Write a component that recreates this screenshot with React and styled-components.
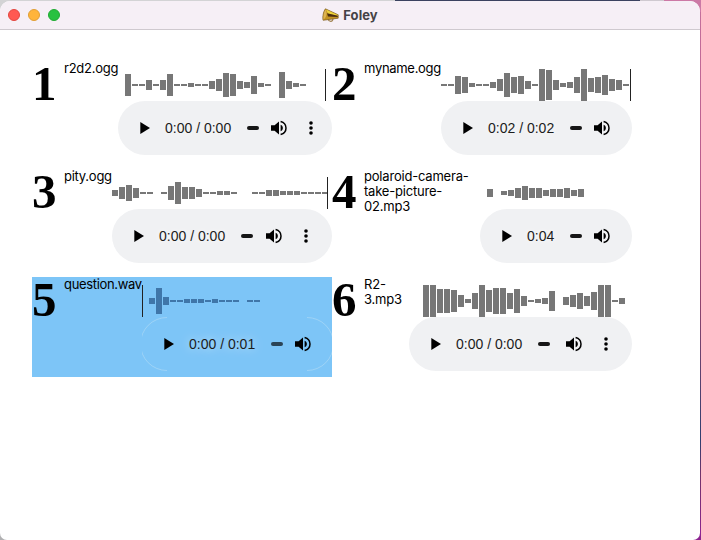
import React from 'react';
import styled, { createGlobalStyle } from 'styled-components';

const GlobalStyle = createGlobalStyle`
  * { box-sizing: border-box; }
  body { margin: 0; overflow: hidden; font-family: Inter, "Liberation Sans", sans-serif; }
`;

const Desktop = styled.div`
  width: 701px;
  height: 540px;
  padding: 1px 1px 0 0;
  background:
    linear-gradient(90deg, #d3d3d5 0 395px, #3b4260 395px 640px, #cfc9d0 640px 664px, #cc79a6 664px) top / 100% 12px no-repeat,
    linear-gradient(90deg, #b0b0b2 0 350px, #8c2391 350px) bottom / 100% 12px no-repeat,
    linear-gradient(180deg, #c5719d 0, #b9598c 180px, #91436f 300px, #2e3f70 440px, #73326b 475px, #8c2391 540px);
`;

const Window = styled.div`
  width: 700px;
  height: 539px;
  overflow: hidden;
  border-radius: 10px 10px 7px 7px;
  background: #fff;
`;

const TitleBar = styled.header`
  display: grid;
  grid-template-columns: 100px 1fr 100px;
  align-items: center;
  height: 29px;
  background: #f6eff6;
  border-bottom: 1px solid #cfc9cf;
`;

const Lights = styled.div`
  display: flex;
  gap: 8px;
  padding-left: 8px;
`;

const Light = styled.span`
  width: 12px;
  height: 12px;
  border-radius: 50%;
  background: ${(p) => p.$fill};
  border: 1px solid ${(p) => p.$edge};
`;

const Title = styled.h1`
  display: flex;
  align-items: center;
  justify-content: center;
  gap: 4px;
  margin: 0;
  font-size: 13px;
  line-height: 16px;
  font-weight: 700;
  letter-spacing: 0.1px;
  color: #454246;
`;

const Board = styled.main`
  display: grid;
  grid-template-columns: 300px 300px;
  grid-auto-rows: 100px;
  row-gap: 8px;
  padding: 31px 32px;
`;

const Card = styled.section`
  display: flex;
  background: ${(p) => (p.$selected ? '#7dc5f7' : 'transparent')};
`;

const Digit = styled.div`
  flex: 0 0 32px;
  height: 48px;
  font: 700 49px/45px "Liberation Serif", serif;
  color: #000;
`;

const FileName = styled.div`
  flex: 1 1 0;
  min-width: 0;
  white-space: pre;
  font-size: 13px;
  line-height: 15px;
  letter-spacing: ${(p) => p.$tracking}px;
  color: #000;
`;

const Sound = styled.div`
  flex: 0 0 ${(p) => p.$width}px;
  padding-top: 8px;
`;

const Wave = styled.svg`
  display: block;
  width: 100%;
  height: 32px;
  color: ${(p) => (p.$selected ? '#3f76a9' : '#777')};
`;

const Player = styled.div`
  display: flex;
  align-items: center;
  height: 54px;
  padding-left: 22px;
  border-radius: 27px;
  background: ${(p) => (p.$selected ? 'transparent' : '#f0f1f3')};
  position: relative;
`;

const Outline = styled.svg`
  position: absolute;
  inset: 0;
  width: 100%;
  height: 100%;
`;

const PlayIcon = styled.svg`
  flex: none;
  width: 10px;
  height: 12px;
  margin-right: 15px;
`;

const Time = styled.span`
  flex: 0 0 ${(p) => p.$width}px;
  white-space: nowrap;
  font: 14px/20px "Liberation Sans", sans-serif;
  color: #1c1c1c;
  text-shadow: 0 0 10px ${(p) => (p.$selected ? 'rgba(255,255,255,.7)' : '#fff')};
`;

const Track = styled.span`
  flex: none;
  width: 12px;
  height: 4px;
  margin-left: 15px;
  border-radius: 2px;
  background: ${(p) => (p.$selected ? '#2b4456' : '#161616')};
`;

const SpeakerIcon = styled.svg`
  flex: none;
  width: 18px;
  height: 18px;
  margin-left: ${(p) => p.$gap}px;
`;

const MenuIcon = styled.svg`
  flex: none;
  width: 4px;
  height: 14px;
  margin-left: 21px;
`;

const sounds = [
  { name: 'r2d2.ogg', tracking: -0.25, width: 214, start: 7, cursor: 207, gap: 11, menu: true, time: '0:00 / 0:00',
    bars: [22, 2, 2, 10, 2, 10, 22, 2, 2, 4, 2, 2, 8, 12, 24, 22, 8, 6, 18, 4, 2, 0, 26, 8, 4, 2] },
  { name: 'myname.ogg', tracking: -0.3, width: 191, start: 0, cursor: 189, gap: 11, time: '0:02 / 0:02',
    bars: [2, 2, 18, 16, 4, 2, 2, 6, 12, 24, 16, 18, 8, 2, 32, 30, 10, 4, 6, 16, 32, 14, 16, 20, 12, 10, 2] },
  { name: 'pity.ogg', tracking: -0.25, width: 220, start: 0, cursor: 215, gap: 12, menu: true, time: '0:00 / 0:00',
    bars: [6, 12, 16, 10, 2, 2, 0, 2, 14, 22, 12, 12, 8, 2, 2, 4, 4, 2, 0, 0, 2, 2, 6, 6, 4, 4, 4, 2, 2, 2, 2] },
  { name: 'polaroid-camera-\ntake-picture-\n02.mp3', tracking: -0.2, width: 152, start: 7, gap: 11, time: '0:04',
    bars: [8, 0, 4, 6, 10, 14, 10, 10, 6, 8, 8, 10, 6, 8] },
  { name: 'question.wav', tracking: -0.33, width: 190, start: 7, cursor: 0, gap: 11, time: '0:00 / 0:01', selected: true,
    bars: [6, 26, 8, 2, 2, 4, 4, 4, 2, 4, 2, 2, 2, 0, 2, 2] },
  { name: 'R2-\n3.mp3', tracking: -0.2, width: 223, start: 14, gap: 15, menu: true, time: '0:00 / 0:00',
    bars: [32, 32, 24, 24, 22, 12, 4, 16, 32, 22, 26, 26, 16, 24, 10, 2, 4, 6, 20, 0, 8, 12, 16, 10, 18, 32, 32, 2, 6] },
];

function Horn() {
  return (
    <svg width="17" height="15" viewBox="0 0 17 15">
      <path d="M6 11c1 3.2 4.8 3.2 5-.2" fill="none" stroke="#a08250" strokeWidth="1.2" />
      <path d="M3.4.8C1.6 3 .3 8.500 1 12.200L3.500 12 16.200 10.200V6.800Z" fill="#c29222" stroke="#7a5a20" strokeWidth=".7" />
      <path d="M4 1.500 6 5.500 15.800 8V7Z" fill="#ecd33c" />
      <path d="M5 5.200 15.800 7.800 15.600 9 6 8.600Z" fill="#4a2d10" />
      <path d="M3.400 1.500C5.500 5 4.500 9 1.500 11.800 1 8 2 4 3.400 1.500Z" fill="#dcb352" />
    </svg>
  );
}

function Waveform({ sound }) {
  return (
    <Wave $selected={sound.selected} shapeRendering="crispEdges">
      {sound.bars.map((h, i) => (
        <rect key={i} x={sound.start + i * 7} y={16 - h / 2} width="6" height={h} fill="currentColor" />
      ))}
      {sound.cursor !== undefined && <rect x={sound.cursor} width="1" height="32" fill="#222" />}
    </Wave>
  );
}

function Controls({ sound }) {
  const { selected, width } = sound;
  return (
    <Player $selected={selected}>
      {selected && (
        <Outline fill="none" stroke="#b4dcf5" strokeWidth=".6">
          <path d={`M25 .5A26.5 26.5 0 0 0 25 53.5M${width - 25} .5A26.5 26.5 0 0 1 ${width - 25} 53.5`} />
        </Outline>
      )}
      <PlayIcon viewBox="0 0 10 12"><path d="M.3 0 10 6 .3 12Z" /></PlayIcon>
      <Time $selected={selected} $width={sound.time.length > 4 ? 67 : 28}>{sound.time}</Time>
      <Track $selected={selected} />
      <SpeakerIcon $gap={sound.gap} viewBox="0 0 18 18">
        <path d="M1 6.2h3.600L9 2.500v13l-4.400-3.700H1Z" />
        <path d="M10.600 5.700c3 1.100 3 5.500 0 6.600Z" />
        <path d="M10.600 2.500c7.200 2 7.200 11 0 13" fill="none" stroke="#000" strokeWidth="1.500" />
      </SpeakerIcon>
      {sound.menu && (
        <MenuIcon viewBox="0 0 4 14">
          <circle cx="2" cy="2" r="1.8" /><circle cx="2" cy="7" r="1.8" /><circle cx="2" cy="12" r="1.8" />
        </MenuIcon>
      )}
    </Player>
  );
}

export default function App() {
  return (
    <Desktop>
      <GlobalStyle />
      <Window>
        <TitleBar>
          <Lights>
            <Light $fill="#ff5952" $edge="#e2463f" />
            <Light $fill="#ffb43b" $edge="#e09e35" />
            <Light $fill="#28c140" $edge="#20aa32" />
          </Lights>
          <Title><Horn />Foley</Title>
        </TitleBar>
        <Board>
          {sounds.map((sound, i) => (
            <Card key={sound.name} $selected={sound.selected}>
              <Digit>{i + 1}</Digit>
              <FileName $tracking={sound.tracking}>{sound.name}</FileName>
              <Sound $width={sound.width}>
                <Waveform sound={sound} />
                <Controls sound={sound} />
              </Sound>
            </Card>
          ))}
        </Board>
      </Window>
    </Desktop>
  );
}
